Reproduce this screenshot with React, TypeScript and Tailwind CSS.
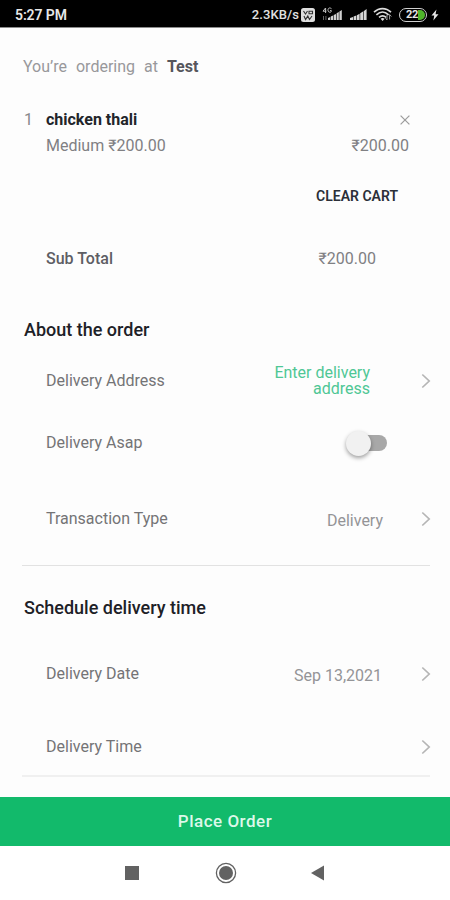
import type { ReactNode } from "react"

// Thin chevron at the end of every tappable row
function Chevron() {
  return (
    <svg viewBox="0 0 10 16" className="h-4 w-[10px]" fill="none" stroke="#b5b5b5" strokeWidth="1.7">
      <path d="M1.3 1.5 8.2 8l-6.9 6.5" />
    </svg>
  )
}

function Row({ label, className, children }: { label: string; className: string; children?: ReactNode }) {
  return (
    <div className={`flex items-center pl-[46px] pr-[19px] ${className}`}>
      <span className="flex-1 whitespace-nowrap text-[#747476]">{label}</span>
      {children}
    </div>
  )
}

function Signal() {
  return (
    <svg viewBox="0 0 17 13" className="h-[13px] w-[17px]" fill="#d6d6d6">
      <path d="M0 12v-2l3-1v3zM3.6 12V8.6l2.7-1V12zM6.9 12V7.2l2.7-1.5V12zM10.2 12V5.2l2.8-1.7V12zM13.6 12V3.2L16.6 1v11z" />
    </svg>
  )
}

function StatusBar() {
  return (
    <div className="flex h-[27px] items-center bg-black pl-[15px] pr-[11px] pt-[2px] text-white">
      <span className="flex-1 text-[14px] font-semibold tracking-[-0.1px] text-[#e8e8e8]">5:27 PM</span>
      <span className="text-[13px] font-medium tracking-[0.1px] text-[#e0e0e0]">2.3KB/s</span>
      {/* VoLTE badge */}
      <svg viewBox="0 0 14 14" className="ml-[2px] h-[14px] w-[14px]">
        <rect width="14" height="14" rx="2.5" fill="#dedede" />
        <path d="M2.5 3l2 3 2-3M8 3.2h3.5v2.6H8zM3 8l1.6 3.5L6.8 8l1.7 3.5L11 8" fill="none" stroke="#333" strokeWidth="1.1" />
      </svg>
      <div className="ml-[7px] flex w-[21px] items-end">
        <svg viewBox="0 0 21 15" className="h-[15px] w-[21px]" fill="#d0d0d0">
          <path d="M3.5 1 1 4.2h3.3M3.6 1v5M9.5 1.7C7-.1 5.8 1.7 6 3.5c.2 2 2.7 2.2 3.3 1V3.6H8" fill="none" stroke="#c4c4c4" strokeWidth="1" />
          <path d="M6 13v-2l2.2-1v3zM8.8 13V9.4l2.3-1V13zM11.7 13V8l2.3-1v6zM14.6 13V6.2l2.2-1.3V13zM17.4 13V4.4L19.8 3v10z" />
          <path d="M1 9h1v4H1zM3.4 9h1v4h-1z" fill="#666" />
        </svg>
      </div>
      <div className="ml-[7px]">
        <Signal />
      </div>
      {/* wifi with a small link mark on its right side */}
      <svg viewBox="0 0 20 15" className="ml-[6px] h-[15px] w-5" fill="none" stroke="#dcdcdc" strokeWidth="1.6">
        <path d="M1 5.2c5-4.8 12-4.8 17 0M3.4 7.8c3.8-3.5 8.4-3.5 12.2 0M6 10.3c2.4-2 4.8-2 7.2 0" />
        <path d="M7.6 11.8 9.6 14l2-2.2c-1.2-1-2.8-1-4 0z" fill="#dcdcdc" stroke="none" />
        <path d="M14 8v5m-1.6-1.8L14 13m2.6-.5v-5m0 0 1.8 2" stroke="#999" strokeWidth="1" />
      </svg>
      <div className="ml-[6px] flex h-[14px] w-[28px] items-center rounded-full border-[1.5px] border-[#d0d0d0] p-px">
        <span className="flex-1 pl-[5px] text-[11px] font-bold leading-none tracking-[-0.3px] text-[#e6e6e6]">22</span>
        <span className="h-[10px] w-[7px] rounded-r-full bg-[#4fb52b]" />
      </div>
      <svg viewBox="0 0 8 13" className="ml-[4px] h-[12px] w-2" fill="#e8e8e8">
        <path d="M5.6.5.2 7h3L2.2 12.5 7.8 5.6H4.6z" />
      </svg>
    </div>
  )
}

export default function App() {
  return (
    <div className="flex h-[900px] w-[450px] flex-col overflow-hidden bg-[#fdfdfd] font-[Roboto,sans-serif] text-[16px] leading-none text-[#808083]">
      <StatusBar />
      <div className="h-px shrink-0 bg-[#8c8c8c]" />

      <p className="flex h-[78px] items-center pl-[23px] text-[#98989b]">
        <span className="whitespace-pre [word-spacing:5px]">You&rsquo;re ordering at </span>
        <span className="font-bold text-[#55565c]">Test</span>
      </p>

      {/* Cart item */}
      <div className="flex h-[28px] items-center pl-6 pr-[40px]">
        <span className="w-[22px] text-[#88888a]">1</span>
        <span className="flex-1 font-bold text-[#22252a]">chicken thali</span>
        <svg viewBox="0 0 10 10" className="h-[10px] w-[10px]" fill="none" stroke="#9c9c9c" strokeWidth="1.2">
          <path d="M.6.6l8.8 8.8M9.4.6.6 9.4" />
        </svg>
      </div>
      <div className="flex h-[23px] items-center justify-between pl-[46px] pr-[41px]">
        <span>Medium ₹200.00</span>
        <span>₹200.00</span>
      </div>
      <div className="flex h-[78px] items-center justify-end pr-[52px]">
        <button type="button" className="text-[14px] font-semibold text-[#2b2f38]">
          CLEAR CART
        </button>
      </div>
      <div className="flex h-[48px] items-center justify-between pl-[46px] pr-[74px]">
        <span className="font-medium text-[#5d5e64]">Sub Total</span>
        <span>₹200.00</span>
      </div>

      <h2 className="mt-[22px] flex h-[50px] items-center pl-6 text-[18px] font-medium text-[#1d2127]">
        About the order
      </h2>
      <Row label="Delivery Address" className="h-[52px]">
        <span className="w-[110px] text-right text-[#4fc795]">Enter delivery address</span>
        <span className="ml-[51px]"><Chevron /></span>
      </Row>
      <Row label="Delivery Asap" className="h-[72px]">
        <button
          type="button"
          role="switch"
          aria-checked={false}
          aria-label="Delivery Asap"
          className="mr-[44px] flex h-4 w-[38px] items-center rounded-full bg-[#a8a8a8]"
        >
          <span className="-ml-[3px] size-[25px] shrink-0 rounded-full bg-[#f1f1f1] shadow-[0_2px_4px_rgba(0,0,0,0.38)]" />
        </button>
      </Row>
      <Row label="Transaction Type" className="h-[80px]">
        <span className="mr-[38px] pt-1 text-[#949497]">Delivery</span>
        <Chevron />
      </Row>
      <hr className="ml-[22px] mr-[20px] mt-[6px] border-[#e2e2e2]" />

      <h2 className="flex h-[84px] items-center pl-6 text-[18px] font-medium text-[#1d2127]">
        Schedule delivery time
      </h2>
      <Row label="Delivery Date" className="h-[48px]">
        <span className="mr-[39px] pt-1 text-[#949497]">Sep 13,2021</span>
        <Chevron />
      </Row>
      <Row label="Delivery Time" className="mt-[21px] h-[56px]">
        <Chevron />
      </Row>
      <hr className="ml-[22px] mr-[20px] border-t-2 border-[#f0f0f0]" />

      <button
        type="button"
        className="mt-[20px] h-[49px] w-full shrink-0 bg-[#12ba6b] text-[17px] font-medium tracking-[0.5px] text-[#dcf8e9]"
      >
        Place Order
      </button>

      {/* Android navigation keys */}
      <div className="flex h-[54px] shrink-0 items-center bg-white pl-[125px] text-[#626262]">
        <span className="size-[14px] bg-current" />
        <svg viewBox="0 0 22 22" className="ml-[76px] size-[22px]" fill="currentColor">
          <circle cx="11" cy="11" r="9.6" fill="none" stroke="currentColor" strokeWidth="1.3" />
          <circle cx="11" cy="11" r="7" />
        </svg>
        <svg viewBox="0 0 13 16" className="ml-[74px] h-4 w-[13px]" fill="currentColor">
          <path d="M0 8 13 .5v15z" />
        </svg>
      </div>
    </div>
  )
}
